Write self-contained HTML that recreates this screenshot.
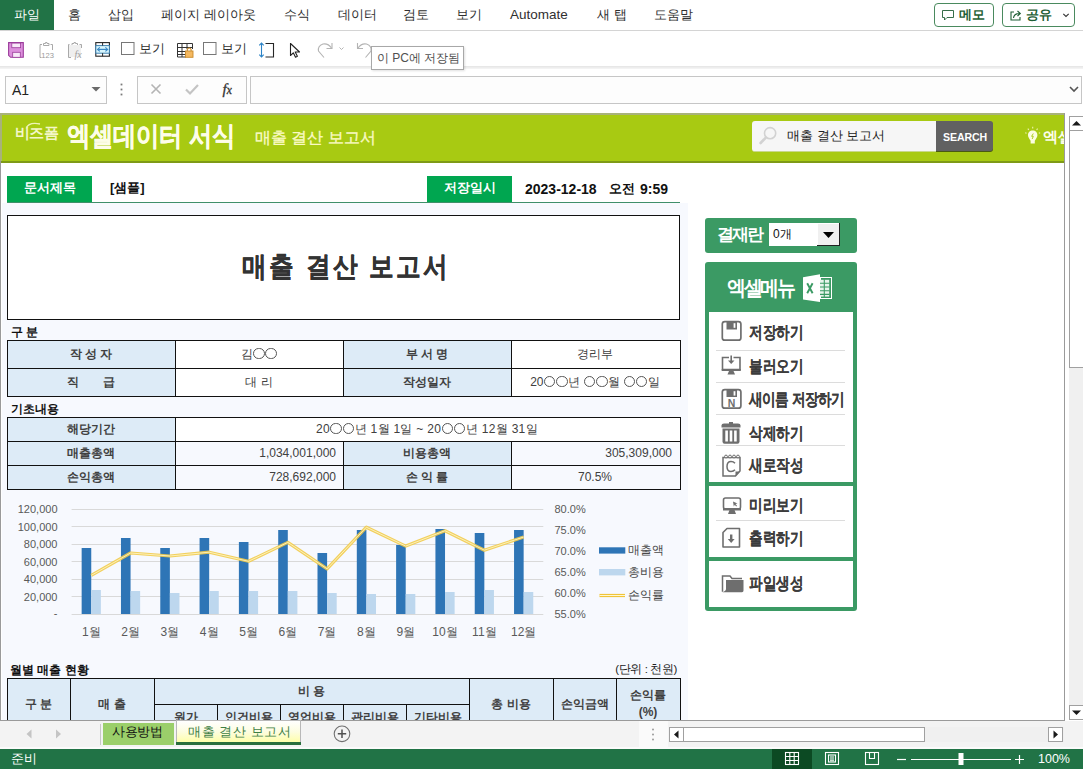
<!DOCTYPE html>
<html><head><meta charset="utf-8">
<style>
*{box-sizing:border-box}
html,body{margin:0;padding:0;width:1083px;height:769px;overflow:hidden;background:#fff;font-family:"Liberation Sans",sans-serif;color:#262626}
.a{position:absolute}
.o{display:inline-block;width:11.5px;height:11.5px;border:1px solid #555;border-radius:50%;vertical-align:-1px;margin:0 0.4px}
.t{position:absolute;white-space:nowrap;line-height:1}
#ribbon .tab{position:absolute;top:8px;font-size:13px;color:#303030;white-space:nowrap;line-height:14px}
</style></head><body>
<!-- ===== RIBBON TABS ===== -->
<div id="ribbon">
  <div class="a" style="left:0;top:0;width:54px;height:30px;background:#217346"></div>
  <div class="tab" style="left:14px;color:#fff">파일</div>
  <div class="tab" style="left:68px">홈</div>
  <div class="tab" style="left:108px">삽입</div>
  <div class="tab" style="left:161px">페이지 레이아웃</div>
  <div class="tab" style="left:284px">수식</div>
  <div class="tab" style="left:338px">데이터</div>
  <div class="tab" style="left:403px">검토</div>
  <div class="tab" style="left:456px">보기</div>
  <div class="tab" style="left:510px;font-size:13.5px">Automate</div>
  <div class="tab" style="left:597px">새 탭</div>
  <div class="tab" style="left:654px">도움말</div>
  <!-- memo / share buttons -->
  <div class="a" style="left:934px;top:3px;width:60px;height:24px;border:1px solid #4a8a5e;border-radius:4px"></div>
  <div class="a" style="left:1002px;top:3px;width:73px;height:24px;border:1px solid #4a8a5e;border-radius:4px"></div>
  <div class="t" style="left:959px;top:8px;font-size:13px;font-weight:bold;color:#1f5f36;line-height:14px">메모</div>
  <div class="t" style="left:1026px;top:8px;font-size:13px;font-weight:bold;color:#1f5f36;line-height:14px">공유</div>
  <svg class="a" style="left:940px;top:8px" width="16" height="14"><path d="M2.5 2.5H13.5V9.5H7L4.5 12V9.5H2.5Z" fill="none" stroke="#1f5f36" stroke-width="0.9" stroke-linejoin="round"/></svg>
  <svg class="a" style="left:1008px;top:7px" width="16" height="16"><path d="M6 5H3V13H12V10" fill="none" stroke="#1f5f36" stroke-width="1.1"/><path d="M5.5 11Q6 6.5 11.5 6.5M9.5 4L12.3 6.5L9.5 9" fill="none" stroke="#1f5f36" stroke-width="1.1"/></svg>
  <svg class="a" style="left:1061px;top:11px" width="10" height="8"><path d="M2.3 2.8L5 5.5L7.7 2.8" fill="none" stroke="#333" stroke-width="1.1"/></svg>
  <div class="a" style="left:0;top:30px;width:1083px;height:1px;background:#d4d4d4"></div>
</div>
<!-- ===== QAT ===== -->
<div id="qat">
  <div class="a" style="left:0;top:66px;width:1083px;height:3px;background:linear-gradient(#e4e4e4,#f6f6f6)"></div>
  <svg class="a" style="left:0;top:31px" width="380" height="36" viewBox="0 31 380 36">
    <!-- save -->
    <path d="M8.6 42.6H23.3V57.3H10.6L8.6 55.3Z" fill="#dc8fdc" stroke="#9b3d9b" stroke-width="1.1"/>
    <rect x="11.8" y="43.1" width="8.8" height="4.6" fill="#f8e8f8" stroke="#9b3d9b" stroke-width="0.8"/>
    <rect x="12.7" y="52.3" width="7.6" height="5" fill="#f8e8f8" stroke="#9b3d9b" stroke-width="0.8"/>
    <!-- paste values -->
    <g fill="none" stroke="#a9a9a9" stroke-width="1">
      <path d="M42 44.5H40V57.5H41.5M50.5 44.5H52.5V50"/>
      <path d="M43.5 45.5V43.5H45.5V42.5H47V43.5H49V45.5Z"/>
      <path d="M69.5 44.5H68.5V57.5H71M79.5 44.5H81.5V48"/>
      <path d="M72 45.5V43.5H74V42.5H75.5V43.5H77.5V45.5Z"/>
    </g>
    <path d="M69 45H81V57H69Z" fill="#efefef"/>
    <text x="41.3" y="57.8" font-size="7.6" fill="#9a9a9a" font-family="Liberation Sans, sans-serif">123</text>
    <text x="74.5" y="57.5" font-size="10" font-style="italic" fill="#a0a0a0" font-family="Liberation Serif, serif">fx</text>
    <!-- freeze -->
    <rect x="95.8" y="42.6" width="13.6" height="13.6" fill="#fff" stroke="#262626" stroke-width="1.1"/>
    <rect x="95.8" y="45.6" width="13.6" height="7.6" fill="#d8f6fd" stroke="#3d7fae" stroke-width="1"/>
    <path d="M102.6 42.6V45.6M102.6 53.2V56.2" stroke="#262626" stroke-width="1"/>
    <path d="M98.2 49.4H107" stroke="#3a88c6" stroke-width="1.2"/>
    <path d="M99.8 47.4L97.6 49.4L99.8 51.4M105.4 47.4L107.6 49.4L105.4 51.4" fill="none" stroke="#3a88c6" stroke-width="1.2"/>
    <!-- checkbox 1 -->
    <rect x="121.5" y="42.5" width="12.5" height="12" fill="#fff" stroke="#777" stroke-width="1"/>
    <!-- table lock -->
    <g stroke="#333" stroke-width="1" fill="none">
      <path d="M177.5 43.5H192.5V49M177.5 43.5V57H186M177.5 47.5H192.5M177.5 51.5H186M177.5 54.5H186M182 43.5V57M187 43.5V49"/>
    </g>
    <rect x="185.5" y="51" width="7.5" height="6.3" fill="#f4b860" stroke="#c98a2a" stroke-width="0.9"/>
    <path d="M187.3 51V49.3Q189.2 46.8 191.1 49.3V51" fill="none" stroke="#c98a2a" stroke-width="1.1"/>
    <!-- checkbox 2 -->
    <rect x="203.5" y="42.5" width="12.5" height="12" fill="#fff" stroke="#777" stroke-width="1"/>
    <!-- resize -->
    <path d="M265.5 43.5H273.5V57H265.5" fill="none" stroke="#262626" stroke-width="1.1"/>
    <path d="M261.5 43V57" stroke="#2b83c6" stroke-width="1.1"/>
    <path d="M259.3 45.3L261.5 43L263.7 45.3M259.3 54.7L261.5 57L263.7 54.7" fill="none" stroke="#2b83c6" stroke-width="1.1"/>
    <!-- cursor -->
    <path d="M290.5 43.5V55.5L293.3 52.8L295.5 57.2L297.4 56.3L295.2 52H299.5Z" fill="#fff" stroke="#222" stroke-width="1.1" stroke-linejoin="round"/>
    <!-- redo -->
    <path d="M332 43V48.5H326.5" fill="none" stroke="#b4b4b4" stroke-width="1.1"/>
    <path d="M331.5 48Q328 43 323 44Q317.5 46 318.5 51L324 57.5" fill="none" stroke="#b4b4b4" stroke-width="1.1"/>
    <path d="M339.5 47.5L341.5 49.5L343.5 47.5" fill="none" stroke="#b4b4b4" stroke-width="1"/>
    <!-- undo -->
    <path d="M357.5 43V48.5H363" fill="none" stroke="#b4b4b4" stroke-width="1.1"/>
    <path d="M358 48Q361.5 43 366.5 44Q372 46 371 51L365.5 57.5" fill="none" stroke="#b4b4b4" stroke-width="1.1"/>
  </svg>
  <div class="t" style="left:139px;top:42px;font-size:12.5px;color:#303030;line-height:14px">보기</div>
  <div class="t" style="left:221px;top:42px;font-size:12.5px;color:#303030;line-height:14px">보기</div>
  <div class="a" style="left:371px;top:46px;width:93px;height:24px;background:#fff;border:1px solid #a8a8a8;box-shadow:1px 1px 2px rgba(0,0,0,0.12)"></div>
  <div class="t" style="left:377px;top:51px;font-size:12px;color:#505050;line-height:14px">이 PC에 저장됨</div>
</div>
<!-- ===== FORMULA BAR ===== -->
<div id="fbar">
  <div class="a" style="left:5px;top:76px;width:102px;height:28px;border:1px solid #c6c6c6;background:#fdfdfd"></div>
  <div class="t" style="left:12px;top:83px;font-size:14px;color:#222;line-height:15px">A1</div>
  <svg class="a" style="left:90px;top:84px" width="12" height="10"><path d="M1.5 3H10.5L6 7.5Z" fill="#6a6a6a"/></svg>
  <svg class="a" style="left:118px;top:82px" width="8" height="16"><rect x="2.6" y="1.6" width="1.8" height="1.8" fill="#7a7a7a"/><rect x="2.6" y="6.6" width="1.8" height="1.8" fill="#7a7a7a"/><rect x="2.6" y="11.6" width="1.8" height="1.8" fill="#7a7a7a"/></svg>
  <div class="a" style="left:137px;top:76px;width:110px;height:28px;border:1px solid #c6c6c6;background:#fdfdfd"></div>
  <svg class="a" style="left:137px;top:76px" width="110" height="28">
    <path d="M14.5 8.5L23.5 17.5M23.5 8.5L14.5 17.5" stroke="#b4b4b4" stroke-width="1.6"/>
    <path d="M49 13.5L53 17.5L61 9" fill="none" stroke="#c4c4c4" stroke-width="2.2"/>
  </svg>
  <div class="t" style="left:222.5px;top:82px;font-size:15px;font-style:italic;font-weight:normal;color:#333;font-family:'Liberation Serif',serif;line-height:15px;-webkit-text-stroke:0.3px #333">f<span style="font-size:11.5px">x</span></div>
  <div class="a" style="left:250px;top:76px;width:832px;height:28px;border:1px solid #c6c6c6;background:#fdfdfd"></div>
  <svg class="a" style="left:1068px;top:84px" width="12" height="10"><path d="M2 3L6 7L10 3" fill="none" stroke="#555" stroke-width="1.6"/></svg>
</div>
<!-- ===== SHEET ===== -->
<div id="sheet">
  <div class="a" style="left:0;top:113px;width:1px;height:607px;background:#9a9a9a"></div>
  <div class="a" style="left:1064px;top:113px;width:1px;height:607px;background:#9a9a9a"></div>
  <div class="a" style="left:0;top:720px;width:1065px;height:1px;background:#9a9a9a"></div>
  <!-- header band -->
  <div class="a" style="left:1px;top:114px;width:1063px;height:47px;background:#a8ca12"></div>
  <div class="a" style="left:0;top:113px;width:1064px;height:1.5px;background:#a8b27a"></div>
  <div class="a" style="left:0;top:113px;width:2px;height:48px;background:#a8b27a"></div>
  <div class="a" style="left:1px;top:161px;width:1063px;height:2px;background:#7e9a16"></div>
  <!-- light bg -->
  <div class="a" style="left:2px;top:203px;width:686px;height:517px;background:#f7f9fe"></div>

  <!-- header content -->
  <div class="t" style="left:15px;top:125px;font-size:15px;font-weight:bold;color:#f4f7c8;letter-spacing:-0.6px">비즈폼</div>
  <svg class="a" style="left:24px;top:119px" width="20" height="16"><path d="M2.3 9.5 Q4.5 2.8 16 5" fill="none" stroke="#eef4b8" stroke-width="1.3"/></svg>
  <div class="t" style="left:67px;top:123px;font-size:27px;font-weight:bold;color:#fdfde8;letter-spacing:-0.2px;transform:scaleX(0.86);transform-origin:0 0;-webkit-text-stroke:0.3px #fdfde8">엑셀데이터 서식</div>
  <div class="t" style="left:255px;top:130px;font-size:16px;color:#fafac4;-webkit-text-stroke:0.35px #fafac4">매출 결산 보고서</div>
  <div class="a" style="left:752px;top:121px;width:184px;height:31px;background:#f6f6f6;border-radius:3px 0 0 3px;border-bottom:1px solid #c8d88a"></div>
  <div class="t" style="left:787px;top:129px;font-size:13px;color:#222">매출 결산 보고서</div>
  <div class="a" style="left:936px;top:121px;width:57px;height:30px;background:#616161;border-radius:0 3px 3px 0;box-shadow:0 1px 0 #4a5a10"></div>
  <div class="t" style="left:943px;top:131.5px;font-size:10.6px;font-weight:bold;color:#fff;letter-spacing:-0.1px">SEARCH</div>
  <div class="t" style="left:1043px;top:129px;font-size:15px;font-weight:bold;color:#fdfde8;width:21px;overflow:hidden;line-height:16px">엑셀</div>
  <svg class="a" style="left:752px;top:121px" width="30" height="31"><circle cx="18.1" cy="12.2" r="5.6" fill="none" stroke="#d2d2d2" stroke-width="1.6"/><path d="M13.8 16.6L8.6 22" stroke="#d2d2d2" stroke-width="2.6" stroke-linecap="round"/></svg>
  <svg class="a" style="left:1024px;top:126px" width="18" height="20"><path d="M8.7 4.5C5.9 4.5 4 6.6 4 9.2C4 11.3 5.6 12.7 6.6 14.8V17.5H10.8V14.8C11.8 12.7 13.4 11.3 13.4 9.2C13.4 6.6 11.5 4.5 8.7 4.5Z" fill="#fbfde0"/><path d="M9.3 7.5L7.6 10.3H9.3L8.2 13" fill="none" stroke="#a8ca12" stroke-width="0.9"/><path d="M8.7 0.8V2.4M3.8 2.6L4.8 3.8M13.6 2.6L12.6 3.8M1.2 6.8L2.6 7.3M16.2 6.8L14.8 7.3" stroke="#eef4b0" stroke-width="1.1"/></svg>
  <!-- labels -->
  <div class="a" style="left:7px;top:176px;width:85px;height:26px;background:#00a650"></div>
  <div class="t" style="left:24px;top:181px;font-size:13px;font-weight:bold;color:#fff">문서제목</div>
  <div class="t" style="left:110px;top:181px;font-size:13px;font-weight:bold;color:#111">[샘플]</div>
  <div class="a" style="left:427px;top:176px;width:85px;height:26px;background:#00a650"></div>
  <div class="t" style="left:444px;top:181px;font-size:13px;font-weight:bold;color:#fff">저장일시</div>
  <div class="t" style="left:525px;top:182px;font-size:14px;font-weight:bold;color:#111;line-height:14px">2023-12-18</div>
  <div class="t" style="left:609px;top:182px;font-size:13px;font-weight:bold;color:#111;line-height:14px">오전</div>
  <div class="t" style="left:640px;top:182px;font-size:14px;font-weight:bold;color:#111;line-height:14px">9:59</div>
  <div class="a" style="left:7px;top:202px;width:673px;height:1px;background:#3f8f6a"></div>
  <!-- title box -->
  <div class="a" style="left:7px;top:215px;width:673px;height:105px;border:1px solid #111;background:#fff"></div>
  <div class="t" style="left:242px;top:253px;font-size:28px;font-weight:bold;color:#333;letter-spacing:2.8px;transform:scaleX(0.88);transform-origin:0 0;-webkit-text-stroke:0.3px #333">매출 결산 보고서</div>
  <div class="t" style="left:11px;top:326px;font-size:12px;font-weight:bold;color:#111">구 분</div>
  <div class="t" style="left:11px;top:403px;font-size:12px;font-weight:bold;color:#111">기초내용</div>
</div>
<!-- tables -->
<div class="a" style="left:7px;top:340px;width:673px;height:56px;background:#fff"></div>
<div class="a" style="left:7px;top:340px;width:168px;height:56px;background:#ddebf7"></div>
<div class="a" style="left:343px;top:340px;width:168px;height:56px;background:#ddebf7"></div>
<div class="a" style="left:7px;top:340px;width:674px;height:1px;background:#111"></div>
<div class="a" style="left:7px;top:368px;width:674px;height:1px;background:#111"></div>
<div class="a" style="left:7px;top:396px;width:674px;height:1px;background:#111"></div>
<div class="a" style="left:7px;top:340px;width:1px;height:57px;background:#111"></div>
<div class="a" style="left:175px;top:340px;width:1px;height:57px;background:#111"></div>
<div class="a" style="left:343px;top:340px;width:1px;height:57px;background:#111"></div>
<div class="a" style="left:511px;top:340px;width:1px;height:57px;background:#111"></div>
<div class="a" style="left:680px;top:340px;width:1px;height:57px;background:#111"></div>
<div class="t" style="left:-59.0px;top:347px;width:300px;height:14px;line-height:14px;text-align:center;font-size:12px;font-weight:bold;color:#404040">작 성 자</div>
<div class="t" style="left:109.0px;top:347px;width:300px;height:14px;line-height:14px;text-align:center;font-size:12px;font-weight:normal;color:#404040">김<i class="o"></i><i class="o"></i></div>
<div class="t" style="left:277.0px;top:347px;width:300px;height:14px;line-height:14px;text-align:center;font-size:12px;font-weight:bold;color:#404040">부 서 명</div>
<div class="t" style="left:445.0px;top:347px;width:300px;height:14px;line-height:14px;text-align:center;font-size:12px;font-weight:normal;color:#404040">경리부</div>
<div class="t" style="left:-59.0px;top:375px;width:300px;height:14px;line-height:14px;text-align:center;font-size:12px;font-weight:bold;color:#404040">직　　급</div>
<div class="t" style="left:109.0px;top:375px;width:300px;height:14px;line-height:14px;text-align:center;font-size:12px;font-weight:normal;color:#404040">대 리</div>
<div class="t" style="left:277.0px;top:375px;width:300px;height:14px;line-height:14px;text-align:center;font-size:12px;font-weight:bold;color:#404040">작성일자</div>
<div class="t" style="left:445.0px;top:375px;width:300px;height:14px;line-height:14px;text-align:center;font-size:12px;font-weight:normal;color:#404040">20<i class="o"></i><i class="o"></i>년 <i class="o"></i><i class="o"></i>월 <i class="o"></i><i class="o"></i>일</div>
<div class="a" style="left:7px;top:417px;width:673px;height:24px;background:#fff"></div>
<div class="a" style="left:7px;top:417px;width:168px;height:72px;background:#ddebf7"></div>
<div class="a" style="left:343px;top:441px;width:168px;height:48px;background:#ddebf7"></div>
<div class="a" style="left:7px;top:417px;width:674px;height:1px;background:#111"></div>
<div class="a" style="left:7px;top:441px;width:674px;height:1px;background:#111"></div>
<div class="a" style="left:7px;top:465px;width:674px;height:1px;background:#111"></div>
<div class="a" style="left:7px;top:489px;width:674px;height:1px;background:#111"></div>
<div class="a" style="left:7px;top:417px;width:1px;height:73px;background:#111"></div>
<div class="a" style="left:175px;top:417px;width:1px;height:73px;background:#111"></div>
<div class="a" style="left:680px;top:417px;width:1px;height:73px;background:#111"></div>
<div class="a" style="left:343px;top:441px;width:1px;height:49px;background:#111"></div>
<div class="a" style="left:511px;top:441px;width:1px;height:49px;background:#111"></div>
<div class="t" style="left:-59.0px;top:422px;width:300px;height:14px;line-height:14px;text-align:center;font-size:12px;font-weight:bold;color:#404040">해당기간</div>
<div class="t" style="left:277.0px;top:422px;width:300px;height:14px;line-height:14px;text-align:center;font-size:12px;font-weight:normal;color:#404040;letter-spacing:0.3px">20<i class="o"></i><i class="o"></i>년 1월 1일 ~ 20<i class="o"></i><i class="o"></i>년 12월 31일</div>
<div class="t" style="left:-59.0px;top:446px;width:300px;height:14px;line-height:14px;text-align:center;font-size:12px;font-weight:bold;color:#404040">매출총액</div>
<div class="t" style="left:36.0px;top:446px;width:300px;height:14px;line-height:14px;text-align:right;font-size:12px;font-weight:normal;color:#404040">1,034,001,000</div>
<div class="t" style="left:277.0px;top:446px;width:300px;height:14px;line-height:14px;text-align:center;font-size:12px;font-weight:bold;color:#404040">비용총액</div>
<div class="t" style="left:372.0px;top:446px;width:300px;height:14px;line-height:14px;text-align:right;font-size:12px;font-weight:normal;color:#404040">305,309,000</div>
<div class="t" style="left:-59.0px;top:470px;width:300px;height:14px;line-height:14px;text-align:center;font-size:12px;font-weight:bold;color:#404040">손익총액</div>
<div class="t" style="left:36.0px;top:470px;width:300px;height:14px;line-height:14px;text-align:right;font-size:12px;font-weight:normal;color:#404040">728,692,000</div>
<div class="t" style="left:277.0px;top:470px;width:300px;height:14px;line-height:14px;text-align:center;font-size:12px;font-weight:bold;color:#404040">손 익 률</div>
<div class="t" style="left:445.0px;top:470px;width:300px;height:14px;line-height:14px;text-align:center;font-size:12px;font-weight:normal;color:#404040">70.5%</div>
<!-- chart -->
<svg class="a" style="left:0;top:490px" width="688" height="160" viewBox="0 490 688 160" font-family="Liberation Sans, sans-serif">
<line x1="71.6" y1="509.5" x2="543.3" y2="509.5" stroke="#d9d9d9" stroke-width="1"/>
<line x1="71.6" y1="526.5" x2="543.3" y2="526.5" stroke="#d9d9d9" stroke-width="1"/>
<line x1="71.6" y1="544.5" x2="543.3" y2="544.5" stroke="#d9d9d9" stroke-width="1"/>
<line x1="71.6" y1="561.5" x2="543.3" y2="561.5" stroke="#d9d9d9" stroke-width="1"/>
<line x1="71.6" y1="579.5" x2="543.3" y2="579.5" stroke="#d9d9d9" stroke-width="1"/>
<line x1="71.6" y1="596.5" x2="543.3" y2="596.5" stroke="#d9d9d9" stroke-width="1"/>
<line x1="71.6" y1="614.5" x2="543.3" y2="614.5" stroke="#d9d9d9" stroke-width="1"/>
<text x="57.5" y="513.0" text-anchor="end" font-size="11" fill="#595959">120,000</text>
<text x="57.5" y="530.5" text-anchor="end" font-size="11" fill="#595959">100,000</text>
<text x="57.5" y="548.0" text-anchor="end" font-size="11" fill="#595959">80,000</text>
<text x="57.5" y="565.5" text-anchor="end" font-size="11" fill="#595959">60,000</text>
<text x="57.5" y="583.0" text-anchor="end" font-size="11" fill="#595959">40,000</text>
<text x="57.5" y="600.5" text-anchor="end" font-size="11" fill="#595959">20,000</text>
<text x="57.5" y="616.5" text-anchor="end" font-size="11" fill="#595959">-</text>
<text x="554.5" y="513" font-size="11" fill="#595959">80.0%</text>
<text x="554.5" y="534" font-size="11" fill="#595959">75.0%</text>
<text x="554.5" y="555" font-size="11" fill="#595959">70.0%</text>
<text x="554.5" y="576" font-size="11" fill="#595959">65.0%</text>
<text x="554.5" y="597" font-size="11" fill="#595959">60.0%</text>
<text x="554.5" y="618" font-size="11" fill="#595959">55.0%</text>
<rect x="81.65" y="548" width="9.6" height="66" fill="#2e75b6"/>
<rect x="91.25" y="590" width="9.6" height="24" fill="#bdd7ee"/>
<text x="91.25" y="636" text-anchor="middle" font-size="12" fill="#595959">1월</text>
<rect x="120.96" y="538" width="9.6" height="76" fill="#2e75b6"/>
<rect x="130.56" y="591" width="9.6" height="23" fill="#bdd7ee"/>
<text x="130.56" y="636" text-anchor="middle" font-size="12" fill="#595959">2월</text>
<rect x="160.27" y="548" width="9.6" height="66" fill="#2e75b6"/>
<rect x="169.87" y="593" width="9.6" height="21" fill="#bdd7ee"/>
<text x="169.87" y="636" text-anchor="middle" font-size="12" fill="#595959">3월</text>
<rect x="199.58" y="538" width="9.6" height="76" fill="#2e75b6"/>
<rect x="209.18" y="591" width="9.6" height="23" fill="#bdd7ee"/>
<text x="209.18" y="636" text-anchor="middle" font-size="12" fill="#595959">4월</text>
<rect x="238.89" y="542" width="9.6" height="72" fill="#2e75b6"/>
<rect x="248.49" y="591" width="9.6" height="23" fill="#bdd7ee"/>
<text x="248.49" y="636" text-anchor="middle" font-size="12" fill="#595959">5월</text>
<rect x="278.20" y="530" width="9.6" height="84" fill="#2e75b6"/>
<rect x="287.80" y="591" width="9.6" height="23" fill="#bdd7ee"/>
<text x="287.80" y="636" text-anchor="middle" font-size="12" fill="#595959">6월</text>
<rect x="317.50" y="553" width="9.6" height="61" fill="#2e75b6"/>
<rect x="327.10" y="593" width="9.6" height="21" fill="#bdd7ee"/>
<text x="327.10" y="636" text-anchor="middle" font-size="12" fill="#595959">7월</text>
<rect x="356.81" y="530" width="9.6" height="84" fill="#2e75b6"/>
<rect x="366.41" y="594" width="9.6" height="20" fill="#bdd7ee"/>
<text x="366.41" y="636" text-anchor="middle" font-size="12" fill="#595959">8월</text>
<rect x="396.12" y="545" width="9.6" height="69" fill="#2e75b6"/>
<rect x="405.72" y="594" width="9.6" height="20" fill="#bdd7ee"/>
<text x="405.72" y="636" text-anchor="middle" font-size="12" fill="#595959">9월</text>
<rect x="435.43" y="529" width="9.6" height="85" fill="#2e75b6"/>
<rect x="445.03" y="592" width="9.6" height="22" fill="#bdd7ee"/>
<text x="445.03" y="636" text-anchor="middle" font-size="12" fill="#595959">10월</text>
<rect x="474.74" y="533" width="9.6" height="81" fill="#2e75b6"/>
<rect x="484.34" y="590" width="9.6" height="24" fill="#bdd7ee"/>
<text x="484.34" y="636" text-anchor="middle" font-size="12" fill="#595959">11월</text>
<rect x="514.05" y="530" width="9.6" height="84" fill="#2e75b6"/>
<rect x="523.65" y="592" width="9.6" height="22" fill="#bdd7ee"/>
<text x="523.65" y="636" text-anchor="middle" font-size="12" fill="#595959">12월</text>
<polyline points="91.25,575.4 130.56,553 169.87,556 209.18,552.2 248.49,561.3 287.80,542.4 327.10,568.8 366.41,527.2 405.72,546.1 445.03,530.7 484.34,550.2 523.65,537" fill="none" stroke="#f1cb4c" stroke-width="3.2" stroke-linejoin="round" opacity="0.9"/>
<polyline points="91.25,575.4 130.56,553 169.87,556 209.18,552.2 248.49,561.3 287.80,542.4 327.10,568.8 366.41,527.2 405.72,546.1 445.03,530.7 484.34,550.2 523.65,537" fill="none" stroke="#fdf4c4" stroke-width="1.0" stroke-linejoin="round" opacity="0.9"/>
<rect x="599" y="547.3" width="26.3" height="6.3" fill="#2e75b6"/>
<rect x="599" y="569" width="26.3" height="6.4" fill="#bdd7ee"/>
<line x1="599.5" y1="595.5" x2="625" y2="595.5" stroke="#f0c232" stroke-width="3.2"/>
<line x1="599.5" y1="595.5" x2="625" y2="595.5" stroke="#fff8d0" stroke-width="1.1"/>
<text x="628" y="554.3" font-size="12" fill="#484848">매출액</text>
<text x="628" y="576.0" font-size="12" fill="#484848">총비용</text>
<text x="628" y="599.3" font-size="12" fill="#484848">손익률</text>
</svg>
<!-- monthly table -->
<div class="a" style="left:7px;top:678px;width:673px;height:44px;background:#ddebf7"></div>
<div class="a" style="left:7px;top:678px;width:674px;height:1px;background:#111"></div>
<div class="a" style="left:7px;top:678px;width:1px;height:45px;background:#111"></div>
<div class="a" style="left:70px;top:678px;width:1px;height:45px;background:#111"></div>
<div class="a" style="left:154px;top:678px;width:1px;height:45px;background:#111"></div>
<div class="a" style="left:217px;top:704px;width:1px;height:19px;background:#111"></div>
<div class="a" style="left:280px;top:704px;width:1px;height:19px;background:#111"></div>
<div class="a" style="left:343px;top:704px;width:1px;height:19px;background:#111"></div>
<div class="a" style="left:406px;top:704px;width:1px;height:19px;background:#111"></div>
<div class="a" style="left:469px;top:678px;width:1px;height:45px;background:#111"></div>
<div class="a" style="left:553px;top:678px;width:1px;height:45px;background:#111"></div>
<div class="a" style="left:616px;top:678px;width:1px;height:45px;background:#111"></div>
<div class="a" style="left:680px;top:678px;width:1px;height:45px;background:#111"></div>
<div class="a" style="left:154px;top:704px;width:316px;height:1px;background:#111"></div>
<div class="t" style="left:-61.5px;top:697px;width:200px;height:14px;line-height:14px;text-align:center;font-size:12px;font-weight:bold;color:#404040">구 분</div>
<div class="t" style="left:12.0px;top:697px;width:200px;height:14px;line-height:14px;text-align:center;font-size:12px;font-weight:bold;color:#404040">매 출</div>
<div class="t" style="left:211.5px;top:683.5px;width:200px;height:14px;line-height:14px;text-align:center;font-size:12px;font-weight:bold;color:#404040">비 용</div>
<div class="t" style="left:85.5px;top:709.5px;width:200px;height:14px;line-height:14px;text-align:center;font-size:12px;font-weight:bold;color:#404040">원가</div>
<div class="t" style="left:148.5px;top:709.5px;width:200px;height:14px;line-height:14px;text-align:center;font-size:12px;font-weight:bold;color:#404040">인건비용</div>
<div class="t" style="left:211.5px;top:709.5px;width:200px;height:14px;line-height:14px;text-align:center;font-size:12px;font-weight:bold;color:#404040">영업비용</div>
<div class="t" style="left:274.5px;top:709.5px;width:200px;height:14px;line-height:14px;text-align:center;font-size:12px;font-weight:bold;color:#404040">관리비용</div>
<div class="t" style="left:337.5px;top:709.5px;width:200px;height:14px;line-height:14px;text-align:center;font-size:12px;font-weight:bold;color:#404040">기타비용</div>
<div class="t" style="left:411.0px;top:697px;width:200px;height:14px;line-height:14px;text-align:center;font-size:12px;font-weight:bold;color:#404040">총 비용</div>
<div class="t" style="left:484.5px;top:697px;width:200px;height:14px;line-height:14px;text-align:center;font-size:12px;font-weight:bold;color:#404040">손익금액</div>
<div class="t" style="left:548.0px;top:688px;width:200px;height:14px;line-height:14px;text-align:center;font-size:12px;font-weight:bold;color:#404040">손익률</div>
<div class="t" style="left:548.0px;top:705px;width:200px;height:14px;line-height:14px;text-align:center;font-size:12px;font-weight:bold;color:#404040">(%)</div>
<div class="t" style="left:10px;top:664px;font-size:12px;font-weight:bold;color:#111">월별 매출 현황</div>
<div class="t" style="left:477px;top:661px;width:200px;text-align:right;font-size:11.5px;color:#222;line-height:14px;letter-spacing:-0.4px;top:662px">(단위 : 천원)</div>
<!-- right panel -->
<div class="a" style="left:705px;top:218px;width:152px;height:35px;background:#3b9a64;border-radius:3px"></div>
<div class="t" style="left:717px;top:226px;font-size:17px;font-weight:bold;color:#fff;letter-spacing:-2px;line-height:18px">결재란</div>
<div class="a" style="left:769px;top:223px;width:49px;height:23px;background:#fff"></div>
<div class="t" style="left:773px;top:228px;font-size:12px;color:#111;line-height:13px">0개</div>
<div class="a" style="left:817px;top:223px;width:23px;height:23px;background:#f0f0f0;border-right:1px solid #222;border-bottom:1px solid #222;box-shadow:inset 1px 1px 0 #fff"></div>
<svg class="a" style="left:817px;top:223px" width="23" height="23"><path d="M6 9H17L11.5 15Z" fill="#000"/></svg>
<div class="a" style="left:705px;top:262px;width:152px;height:349px;background:#3b9a64;border-radius:3px"></div>
<div class="t" style="left:727px;top:277px;font-size:21px;font-weight:bold;color:#fff;letter-spacing:-2.4px;line-height:22px;transform:scaleX(0.9);transform-origin:0 0">엑셀메뉴</div>
<svg class="a" style="left:800px;top:272px" width="36" height="32" viewBox="800 272 36 32">
  <rect x="820.5" y="277.5" width="11" height="21" fill="none" stroke="#fff" stroke-width="1"/>
  <rect x="820" y="279.8" width="9.2" height="16.8" fill="#e8f4ec"/>
  <path d="M820 283.3H829.5M820 287H829.5M820 290.7H829.5M820 294.4H829.5M824.3 279.5V297" stroke="#3b9a64" stroke-width="1.1"/>
  <path d="M803 277.2L820 274.2V302L803 299.4Z" fill="#fff"/>
  <path d="M807.2 283.2L812.6 293.2M812.6 283.2L807.2 293.2" stroke="#3b9a64" stroke-width="1.9"/>
</svg>
<div class="a" style="left:709px;top:312px;width:144px;height:170px;background:#fff"></div>
<div class="a" style="left:709px;top:486px;width:144px;height:71px;background:#fff"></div>
<div class="a" style="left:709px;top:561px;width:144px;height:46px;background:#fff"></div>
<div class="a" style="left:716px;top:350px;width:129px;height:1px;background:#dcdcdc"></div>
<div class="a" style="left:716px;top:414px;width:129px;height:1px;background:#dcdcdc"></div>
<div class="a" style="left:716px;top:445px;width:129px;height:1px;background:#dcdcdc"></div>
<div class="a" style="left:716px;top:520px;width:129px;height:1px;background:#dcdcdc"></div>
<div class="a" style="left:716px;top:382px;width:129px;height:1px;background:#dcdcdc"></div>
<div class="t" style="left:749px;top:323.5px;font-size:17px;font-weight:bold;color:#3c3c3c;-webkit-text-stroke:0.05px #3c3c3c;letter-spacing:0px;line-height:18px;transform:scaleX(0.8);transform-origin:0 0">저장하기</div>
<div class="t" style="left:749px;top:357.5px;font-size:17px;font-weight:bold;color:#3c3c3c;-webkit-text-stroke:0.05px #3c3c3c;letter-spacing:0px;line-height:18px;transform:scaleX(0.8);transform-origin:0 0">불러오기</div>
<div class="t" style="left:749px;top:390.5px;font-size:17px;font-weight:bold;color:#3c3c3c;-webkit-text-stroke:0.05px #3c3c3c;letter-spacing:-0.6px;line-height:18px;transform:scaleX(0.8);transform-origin:0 0">새이름 저장하기</div>
<div class="t" style="left:749px;top:425.0px;font-size:17px;font-weight:bold;color:#3c3c3c;-webkit-text-stroke:0.05px #3c3c3c;letter-spacing:0px;line-height:18px;transform:scaleX(0.8);transform-origin:0 0">삭제하기</div>
<div class="t" style="left:749px;top:457.0px;font-size:17px;font-weight:bold;color:#3c3c3c;-webkit-text-stroke:0.05px #3c3c3c;letter-spacing:0px;line-height:18px;transform:scaleX(0.8);transform-origin:0 0">새로작성</div>
<div class="t" style="left:749px;top:496.5px;font-size:17px;font-weight:bold;color:#3c3c3c;-webkit-text-stroke:0.05px #3c3c3c;letter-spacing:0px;line-height:18px;transform:scaleX(0.8);transform-origin:0 0">미리보기</div>
<div class="t" style="left:749px;top:529.5px;font-size:17px;font-weight:bold;color:#3c3c3c;-webkit-text-stroke:0.05px #3c3c3c;letter-spacing:0px;line-height:18px;transform:scaleX(0.8);transform-origin:0 0">출력하기</div>
<div class="t" style="left:749px;top:575.0px;font-size:17px;font-weight:bold;color:#3c3c3c;-webkit-text-stroke:0.05px #3c3c3c;letter-spacing:0px;line-height:18px;transform:scaleX(0.8);transform-origin:0 0">파일생성</div>
<svg class="a" style="left:715px;top:315px" width="40" height="300" viewBox="715 315 40 300">
 <g fill="none" stroke="#6e6e6e" stroke-width="1.7">
  <rect x="722.3" y="321.6" width="18.6" height="18.6" rx="2.5"/>
  <rect x="722.3" y="389.6" width="18.6" height="18.6" rx="2.5"/>
 </g>
 <path d="M726.5 322H737V329.5H726.5Z" fill="#6e6e6e"/><rect x="733.6" y="323.2" width="1.8" height="4.6" fill="#fff"/>
 <path d="M726.5 390H737V397H726.5Z" fill="#6e6e6e"/><rect x="733.6" y="391.2" width="1.8" height="4.4" fill="#fff"/>
 <text x="731.6" y="407" text-anchor="middle" font-size="10.5" font-weight="bold" fill="#6e6e6e" font-family="Liberation Sans, sans-serif">N</text>
 <!-- monitor download -->
 <path d="M729 357.5H722.5V369.5H740V357.5H733.5" fill="none" stroke="#6e6e6e" stroke-width="1.6"/>
 <path d="M721.7 369H740.8V371H721.7Z" fill="#6e6e6e"/>
 <path d="M727.5 374.5L729 371H733.5L735 374.5Z" fill="#6e6e6e"/>
 <path d="M731.2 355.5V362" stroke="#6e6e6e" stroke-width="1.6"/><path d="M728 360.5H734.5L731.2 364Z" fill="#6e6e6e"/>
 <!-- trash -->
 <path d="M721.5 425.5Q721.5 423.5 724 423.5H738Q740.5 423.5 740.5 425.5V427.5H721.5Z" fill="#6e6e6e"/>
 <rect x="729" y="422" width="4" height="2" fill="#6e6e6e"/>
 <path d="M722.5 428.5H739.5V441.5Q739.5 443.7 737.5 443.7H724.5Q722.5 443.7 722.5 441.5Z" fill="#6e6e6e"/>
 <rect x="725.3" y="430.5" width="2.6" height="11" fill="#fff"/><rect x="729.7" y="430.5" width="2.6" height="11" fill="#fff"/><rect x="734.1" y="430.5" width="2.6" height="11" fill="#fff"/>
 <!-- notepad C -->
 <path d="M723 457.5H740V471L735.5 476H723Z" fill="none" stroke="#6e6e6e" stroke-width="1.5"/>
 <path d="M735.5 476V471.5H740Z" fill="#6e6e6e"/>
 <circle cx="726" cy="456.5" r="1.4" fill="#fff" stroke="#6e6e6e" stroke-width="1"/><circle cx="730" cy="456.5" r="1.4" fill="#fff" stroke="#6e6e6e" stroke-width="1"/><circle cx="734" cy="456.5" r="1.4" fill="#fff" stroke="#6e6e6e" stroke-width="1"/><circle cx="738" cy="456.5" r="1.4" fill="#fff" stroke="#6e6e6e" stroke-width="1"/>
 <path d="M735 463.2Q733.5 461.5 731 461.5Q727 461.5 727 466.5Q727 471.5 731 471.5Q733.5 471.5 735 469.8" fill="none" stroke="#6e6e6e" stroke-width="1.5"/>
 <!-- monitor cursor -->
 <rect x="723.5" y="498" width="17" height="11" rx="2" fill="none" stroke="#6e6e6e" stroke-width="1.6"/>
 <path d="M723 508H741V510.5H723Z" fill="#6e6e6e"/>
 <path d="M728 514L729.5 510H734.5L736 514Z" fill="#6e6e6e"/>
 <path d="M733 501.5L737.5 503.5L735.5 504L737 505.8L736.2 506.5L734.8 504.8L733.8 506.5Z" fill="#6e6e6e"/>
 <!-- doc arrow -->
 <path d="M727 528.5H739.5V547H723V532.5Z" fill="none" stroke="#6e6e6e" stroke-width="1.6" stroke-linejoin="round"/>
 <path d="M731.2 534.5V539.5" stroke="#6e6e6e" stroke-width="2.4"/><path d="M727.8 539H734.6L731.2 543Z" fill="#6e6e6e"/>
 <!-- folder -->
 <path d="M722.5 591.8V576H730L732 578.5H742" fill="none" stroke="#6e6e6e" stroke-width="1.5"/>
 <path d="M726 580H743.5V590.5Q743.5 592.2 742 592.2H722.5Q726 591 726 589Z" fill="#6e6e6e"/>
</svg>
<!-- ===== VERTICAL SCROLLBAR ===== -->
<div id="vscroll">
  <div class="a" style="left:1065px;top:113px;width:18px;height:608px;background:#fff"></div>
  <div class="a" style="left:1069px;top:367px;width:14px;height:338px;background:#f0f0f0"></div>
  <div class="a" style="left:1069px;top:116px;width:15px;height:15px;background:#fff;border:1px solid #a0a0a0"></div>
  <svg class="a" style="left:1069px;top:116px" width="14" height="15"><path d="M3 9.5 L7.5 5 L12 9.5Z" fill="#1a1a1a"/></svg>
  <div class="a" style="left:1069px;top:130px;width:15px;height:238px;background:#fff;border:1px solid #a0a0a0"></div>
  <div class="a" style="left:1069px;top:705px;width:15px;height:15px;background:#fff;border:1px solid #a0a0a0"></div>
  <svg class="a" style="left:1069px;top:705px" width="14" height="15"><path d="M3 5.5 L7.5 10 L12 5.5Z" fill="#1a1a1a"/></svg>
</div>
<!-- ===== SHEET TABS ===== -->
<div id="tabs">
  <div class="a" style="left:0;top:721px;width:1083px;height:28px;background:#f3f3f3"></div>
  <div class="a" style="left:0;top:720px;width:1065px;height:1px;background:#9a9a9a"></div>
  <svg class="a" style="left:20px;top:727px" width="50" height="14"><path d="M11.5 2.5 L6.5 7 L11.5 11.5Z" fill="#c4c4c4"/><path d="M36 2.5 L41 7 L36 11.5Z" fill="#c4c4c4"/></svg>
  <div class="a" style="left:100px;top:724px;width:1px;height:21px;background:#c8c8c8"></div>
  <div class="a" style="left:103px;top:723px;width:71px;height:22px;background:#9bcf6a"></div>
  <div class="t" style="left:112px;top:724px;font-size:13px;color:#111;letter-spacing:-0.3px;line-height:16px">사용방법</div>
  <div class="a" style="left:176px;top:720px;width:125px;height:25px;background:linear-gradient(#ffffff 0%,#fdfde0 45%,#ffff9a 100%);border:1px solid #b8b8b8;border-bottom:none"></div>
  <div class="a" style="left:176px;top:742px;width:125px;height:2.5px;background:#2a6e3e"></div>
  <div class="t" style="left:188px;top:724px;font-size:13px;color:#3f7f45;letter-spacing:0.6px;line-height:16px">매출 결산 보고서</div>
  <svg class="a" style="left:332px;top:724px" width="20" height="20"><circle cx="10" cy="9.8" r="7.8" fill="none" stroke="#707070" stroke-width="1.1"/><path d="M10 5.6V14M5.8 9.8H14.2" stroke="#505050" stroke-width="1.5"/></svg>
  <div class="a" style="left:639px;top:721px;width:29px;height:28px;background:#fafafa"></div>
  <svg class="a" style="left:650px;top:727px" width="6" height="16"><circle cx="3" cy="2.5" r="1" fill="#9a9a9a"/><circle cx="3" cy="7.5" r="1" fill="#9a9a9a"/><circle cx="3" cy="12.5" r="1" fill="#9a9a9a"/></svg>
  <div class="a" style="left:669px;top:727px;width:395px;height:15px;background:#f0f0f0"></div>
  <div class="a" style="left:669px;top:727px;width:15px;height:15px;background:#fff;border:1px solid #a0a0a0"></div>
  <svg class="a" style="left:669px;top:727px" width="15" height="15"><path d="M9.5 3.5 L5 7.5 L9.5 11.5Z" fill="#1a1a1a"/></svg>
  <div class="a" style="left:683px;top:727px;width:242px;height:15px;background:#fff;border:1px solid #a0a0a0"></div>
  <div class="a" style="left:1048px;top:727px;width:15px;height:15px;background:#fff;border:1px solid #a0a0a0"></div>
  <svg class="a" style="left:1048px;top:727px" width="15" height="15"><path d="M5.5 3.5 L10 7.5 L5.5 11.5Z" fill="#1a1a1a"/></svg>
</div>
<!-- ===== STATUS BAR ===== -->
<div id="status">
  <div class="a" style="left:0;top:747px;width:1083px;height:2px;background:#fbfbfb"></div>
  <div class="a" style="left:0;top:749px;width:1083px;height:20px;background:#217346"></div>
  <div class="t" style="left:11px;top:751px;font-size:13px;color:#fff;line-height:16px">준비</div>
  <div class="a" style="left:772px;top:749px;width:40px;height:20px;background:#0c4a23"></div>
  <svg class="a" style="left:772px;top:749px" width="120" height="20">
    <g stroke="#fff" stroke-width="1.1" fill="none">
      <rect x="13.5" y="3.5" width="13" height="12"/><path d="M17.8 3.5V15.5M22.2 3.5V15.5M13.5 7.5H26.5M13.5 11.5H26.5"/>
      <rect x="53.5" y="3.5" width="13" height="12"/><rect x="56.5" y="6" width="7" height="7"/><path d="M58 8H62M58 10H62M58 11.8H62"/>
      <rect x="93.5" y="3.5" width="13" height="12"/><path d="M97.5 3.5V9.5H102.5V3.5"/>
    </g>
  </svg>
  <svg class="a" style="left:895px;top:749px" width="130" height="20">
    <path d="M2 10.5H11" stroke="#fff" stroke-width="1.2"/>
    <path d="M16 10.5H116" stroke="#fff" stroke-width="1"/>
    <rect x="63.5" y="4" width="5" height="12" fill="#fff"/>
    <path d="M120 10.5H129M124.5 6V15" stroke="#fff" stroke-width="1.2"/>
  </svg>
  <div class="t" style="left:1038px;top:751px;font-size:12.5px;color:#fff;line-height:16px">100%</div>
</div>
</body></html>
